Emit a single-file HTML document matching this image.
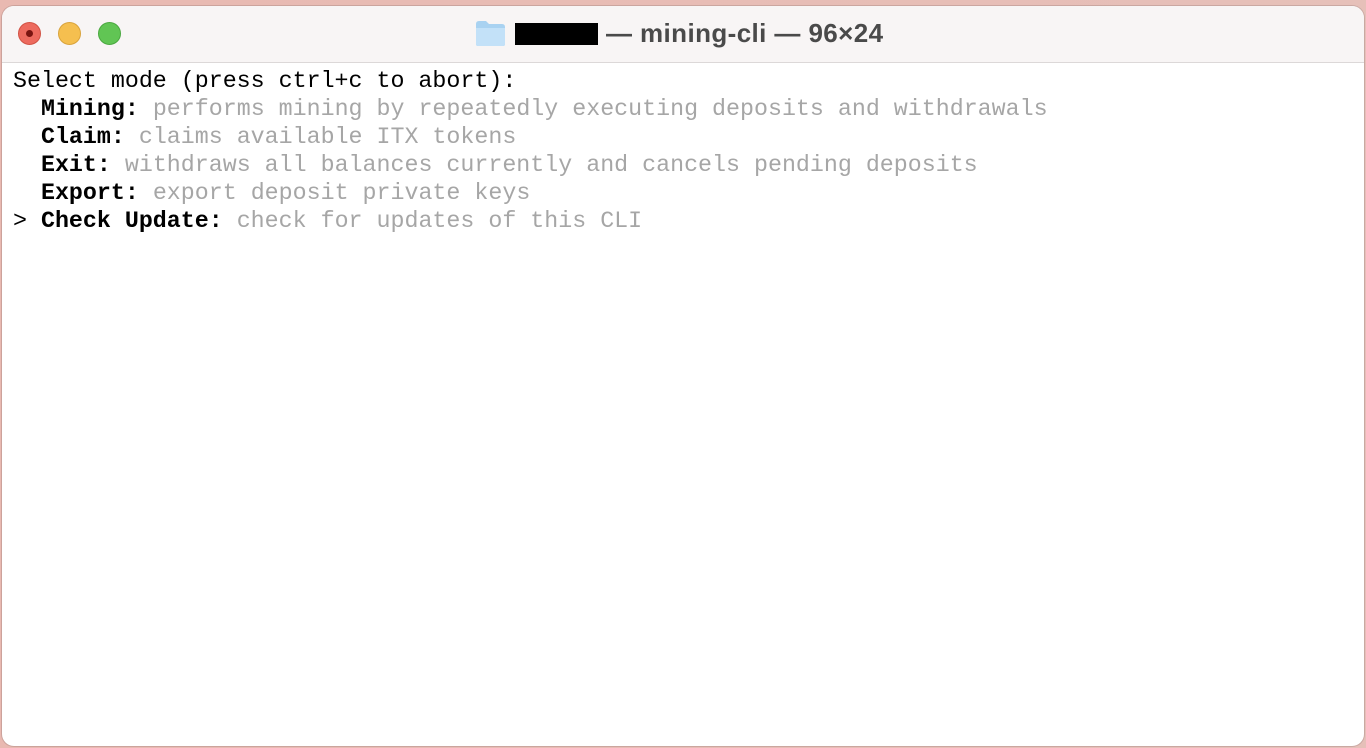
<!DOCTYPE html>
<html><head><meta charset="utf-8"><style>
html,body{margin:0;padding:0;width:1366px;height:748px;overflow:hidden;background:linear-gradient(90deg,#e9b9b1,#e6c0b9);}
.win{position:absolute;left:2px;top:6px;width:1362px;height:740px;background:#fff;border-radius:12px;overflow:hidden;box-shadow:0 0 0 1px rgba(0,0,0,0.12);}
.tb{position:absolute;left:0;top:0;width:100%;height:56px;background:#f8f5f5;border-bottom:1px solid #dcd8d8;}
.dot{position:absolute;top:16px;width:23px;height:23px;border-radius:50%;box-sizing:border-box;}
.r{left:16px;background:#ed6a5e;border:1px solid #d25244}
.r:after{content:"";position:absolute;left:7px;top:7px;width:7px;height:7px;border-radius:50%;background:#7a1410}
.y{left:56px;background:#f5bf4f;border:1px solid #d9a33b}
.g{left:96px;background:#61c554;border:1px solid #4aa83f}
.title{position:absolute;top:12px;height:32px;font:bold 26px "Liberation Sans",sans-serif;letter-spacing:0.4px;color:#4a4a4a;line-height:32px;white-space:nowrap;}
.folder{position:absolute;left:473px;top:14px;width:31px;height:27px;}
.blk{position:absolute;left:513px;top:17px;width:83px;height:22px;background:#000;}
.t2{left:604px;top:11px;}
.term{position:absolute;left:11px;top:61px;font:23.3px/28px "Liberation Mono",monospace;color:#000;white-space:pre;}
b{font-weight:bold}
.d{color:#a6a6a6}
</style></head><body>
<div class="win">
<div class="tb">
<div class="dot r"></div><div class="dot y"></div><div class="dot g"></div>
<svg class="folder" viewBox="0 0 31 27"><path d="M1 4 Q1 1 4 1 L11 1 L14 4 L27 4 Q30 4 30 7 L30 24 Q30 26 28 26 L3 26 Q1 26 1 24Z" fill="#a9d2f1"/><path d="M1 8 L30 8 L30 24 Q30 26 28 26 L3 26 Q1 26 1 24Z" fill="#c3e1f8"/></svg>
<div class="blk"></div>
<div class="title t2">— mining-cli — 96×24</div>
</div>
<div class="term">Select mode (press ctrl+c to abort):
  <b>Mining:</b> <span class="d">performs mining by repeatedly executing deposits and withdrawals</span>
  <b>Claim:</b> <span class="d">claims available ITX tokens</span>
  <b>Exit:</b> <span class="d">withdraws all balances currently and cancels pending deposits</span>
  <b>Export:</b> <span class="d">export deposit private keys</span>
&gt; <b>Check Update:</b> <span class="d">check for updates of this CLI</span></div>
</div>
</body></html>
